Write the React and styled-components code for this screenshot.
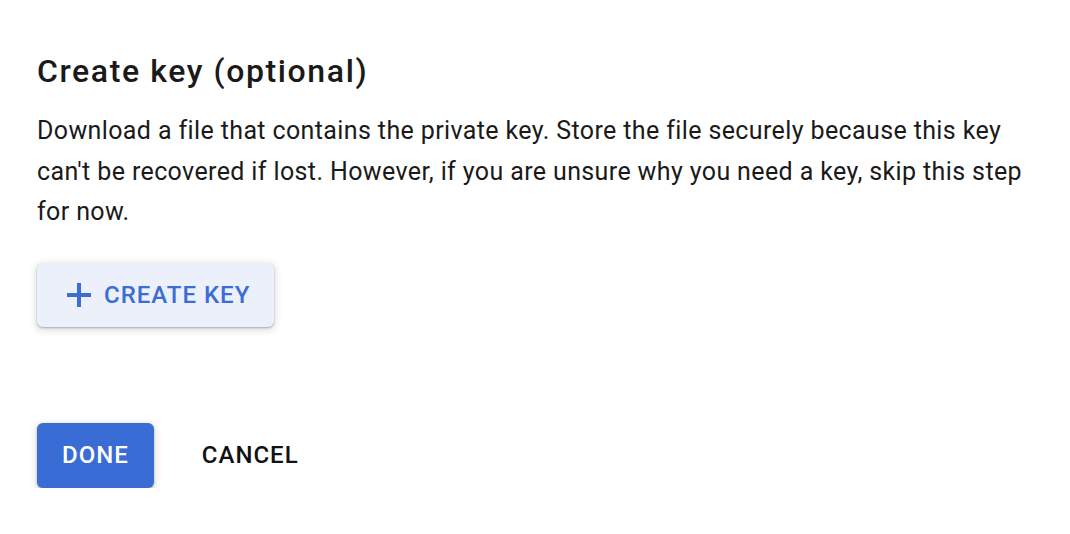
import React from "react";
import styled, { createGlobalStyle } from "styled-components";

const GlobalStyle = createGlobalStyle`
  html, body {
    margin: 0;
    padding: 0;
    background: #ffffff;
  }
  body {
    font-family: Roboto, "Noto Sans", Arial, sans-serif;
    color: #202124;
  }
`;

const Page = styled.div`
  padding: 51px 36px 0 37px;
  display: flex;
  flex-direction: column;
  align-items: flex-start;
`;

const Title = styled.h2`
  margin: 0;
  font-size: 32px;
  font-weight: 500;
  line-height: 40px;
  letter-spacing: 1.6px;
  color: #1a1a1a;
`;

const Description = styled.p`
  margin: 20px 0 0 0;
  width: 995px;
  font-size: 25px;
  line-height: 40.5px;
  letter-spacing: 0.38px;
  color: #1a1a1a;
`;

const Actions = styled.div`
  display: flex;
  align-items: center;
  gap: ${(p) => p.$gap || 0}px;
  margin-top: ${(p) => p.$top}px;
`;

const Button = styled.button`
  display: inline-flex;
  align-items: center;
  gap: 13px;
  height: ${(p) => p.$h || 64}px;
  padding: 0 ${(p) => p.$right || 25}px 0 ${(p) => p.$left || 25}px;
  border: none;
  border-radius: 6px;
  font-family: inherit;
  font-size: 24px;
  font-weight: 500;
  letter-spacing: 1px;
  text-transform: uppercase;
  cursor: pointer;
  background: ${(p) =>
    p.$variant === "primary" ? "#3a6cd6" : p.$variant === "tonal" ? "#ecf0fa" : "transparent"};
  color: ${(p) =>
    p.$variant === "primary" ? "#ffffff" : p.$variant === "tonal" ? "#3b6dd5" : "#111111"};
  box-shadow: ${(p) =>
    p.$variant === "text"
      ? "none"
      : "0 1px 2px rgba(60, 64, 67, 0.35), 0 2px 6px 2px rgba(60, 64, 67, 0.15)"};
`;

const PlusIcon = () => (
  <svg width="24" height="24" viewBox="0 0 24 24" aria-hidden="true">
    <path d="M10 0h4v10h10v4H14v10h-4V14H0v-4h10z" fill="currentColor" />
  </svg>
);

export default function App() {
  return (
    <>
      <GlobalStyle />
      <Page>
        <Title>Create key (optional)</Title>
        <Description>
          Download a file that contains the private key. Store the file securely because this key
          can't be recovered if lost. However, if you are unsure why you need a key, skip this step
          for now.
        </Description>
        <Actions $top={30}>
          <Button $variant="tonal" $left={30} $right={24}>
            <PlusIcon />
            Create key
          </Button>
        </Actions>
        <Actions $top={96} $gap={24}>
          <Button $variant="primary" $h={65} $left={25} $right={25}>
            Done
          </Button>
          <Button $variant="text" $h={65} $left={24} $right={24}>
            Cancel
          </Button>
        </Actions>
      </Page>
    </>
  );
}
